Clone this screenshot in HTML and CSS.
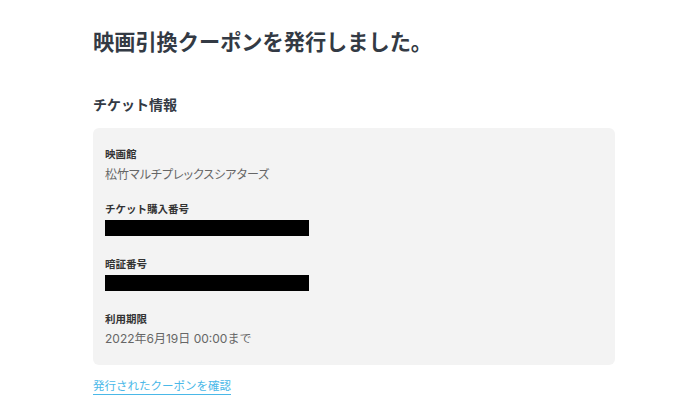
FILE: index.html
```html
<!DOCTYPE html>
<html lang="ja">
<head>
<meta charset="utf-8">
<link rel="stylesheet" href="styles.css">
</head>
<body>
<main class="page">
  <h1 class="title">映画引換クーポンを発行しました。</h1>
  <h2 class="section-title">チケット情報</h2>
  <div class="card">
    <div class="item">
      <div class="label">映画館</div>
      <div class="value">松竹マルチプレックスシアターズ</div>
    </div>
    <div class="item">
      <div class="label">チケット購入番号</div>
      <div class="redacted"></div>
    </div>
    <div class="item">
      <div class="label">暗証番号</div>
      <div class="redacted"></div>
    </div>
    <div class="item">
      <div class="label">利用期限</div>
      <div class="value value-date">2022年6月19日 00:00まで</div>
    </div>
  </div>
  <a class="link" href="#">発行されたクーポンを確認</a>
</main>
</body>
</html>
```
FILE: styles.css
```css
* { box-sizing: border-box; }
html, body { margin: 0; padding: 0; background: #fff; }
body {
  font-family: "Noto Sans CJK JP", "Noto Sans", sans-serif;
  color: #333a44;
}
.page {
  padding: 26px 0 0 93px;
  width: 615px;
  display: flex;
  flex-direction: column;
  align-items: flex-start;
}
.title {
  margin: 0;
  font-size: 21.2px;
  line-height: 30px;
  font-weight: 700;
  color: #333a44;
}
.section-title {
  margin: 38px 0 0;
  font-size: 14px;
  line-height: 20px;
  font-weight: 700;
  color: #333a44;
}
.card {
  margin-top: 14px;
  width: 522px;
  background: #f3f3f3;
  border-radius: 6px;
  padding: 18px 12px 17px;
  display: flex;
  flex-direction: column;
  gap: 18px;
}
.item {
  display: flex;
  flex-direction: column;
  gap: 3px;
}
.label {
  font-size: 10.5px;
  line-height: 16px;
  font-weight: 700;
  color: #333;
}
.value {
  font-size: 12px;
  line-height: 18px;
  color: #666;
  font-feature-settings: "palt";
}
.value-date {
  font-family: "Inter", "Noto Sans CJK JP", sans-serif;
  font-feature-settings: normal;
}
.redacted {
  width: 204px;
  height: 16px;
  background: #000;
  margin-bottom: 2px;
}
.link {
  margin-top: 11px;
  font-size: 11.5px;
  line-height: 18px;
  color: #4ab8e8;
  text-decoration: none;
  border-bottom: 1.5px solid #4ab8e8;
}
```
